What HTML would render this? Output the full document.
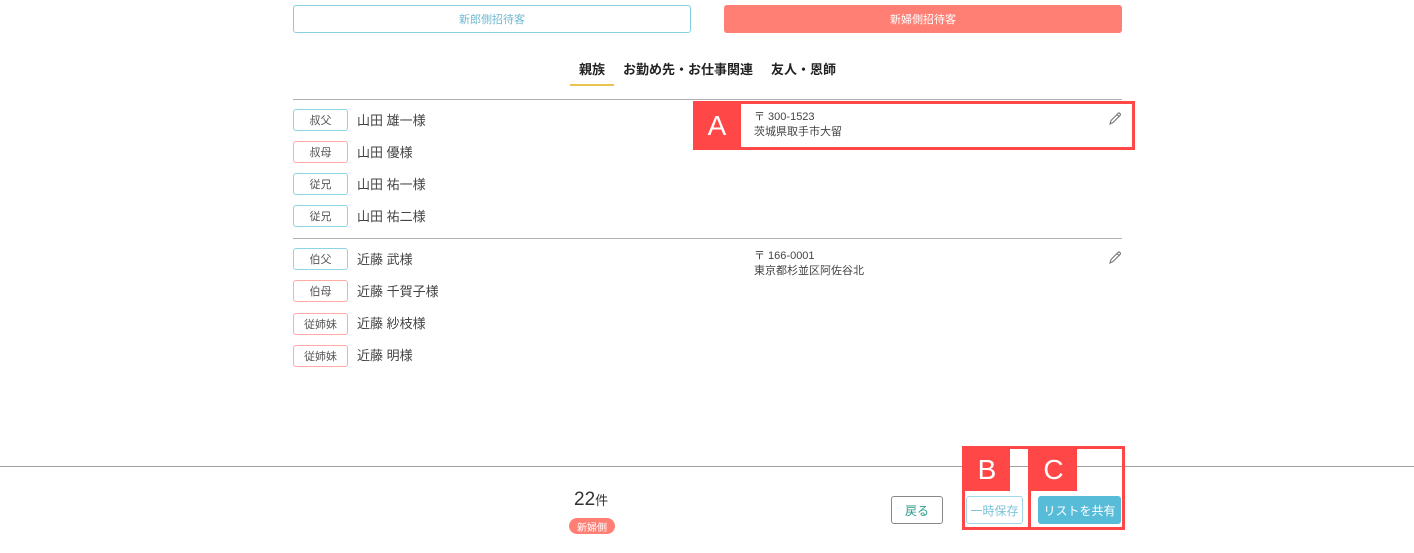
<!DOCTYPE html>
<html><head><meta charset="utf-8"><style>
*{box-sizing:border-box;margin:0;padding:0}
body{width:1414px;height:553px;background:#fff;position:relative;font-family:"Liberation Sans","Noto Sans CJK JP",sans-serif;color:#333;overflow:hidden}
.a{position:absolute}
.btn{position:absolute;display:flex;align-items:center;justify-content:center;font-size:11px;border-radius:3px}
.tag{position:absolute;left:293px;width:55px;height:22px;border:1px solid;border-radius:3px;font-size:11px;display:flex;align-items:center;justify-content:center;color:#555}
.b{border-color:#8fd3e6}.p{border-color:#ffaaa5}
.nm{position:absolute;left:357px;font-size:13px;color:#444;line-height:16px}
.addr{position:absolute;left:754px;font-size:11px;color:#444;line-height:16px}
.lbl{position:absolute;background:#ff4747;color:#fff;font-size:28px;display:flex;align-items:center;justify-content:center}
</style></head><body>
<div class="btn" style="left:293px;top:5px;width:398px;height:28px;border:1px solid #85d0e2;color:#6fb9d0">新郎側招待客</div>
<div class="btn" style="left:724px;top:5px;width:398px;height:28px;background:#ff7f75;color:#fff">新婦側招待客</div>
<div class="a" style="left:579px;top:59px;font-size:13px;font-weight:bold;color:#222;white-space:nowrap">親族</div>
<div class="a" style="left:623px;top:59px;font-size:13px;font-weight:bold;color:#222;white-space:nowrap">お勤め先・お仕事関連</div>
<div class="a" style="left:771px;top:59px;font-size:13px;font-weight:bold;color:#222;white-space:nowrap">友人・恩師</div>
<div class="a" style="left:570px;top:84px;width:44px;height:2px;background:#e8c34f"></div>
<div class="a" style="left:293px;top:99px;width:829px;height:1px;background:#b0b0b0"></div>

<div class="tag b" style="top:109px">叔父</div><div class="nm" style="top:113px">山田 雄一様</div>
<div class="tag p" style="top:141px">叔母</div><div class="nm" style="top:145px">山田 優様</div>
<div class="tag b" style="top:173px">従兄</div><div class="nm" style="top:177px">山田 祐一様</div>
<div class="tag b" style="top:205px">従兄</div><div class="nm" style="top:209px">山田 祐二様</div>

<div class="a" style="left:693px;top:101px;width:442px;height:49px;border:3px solid #ff4747"></div>
<div class="lbl" style="left:693px;top:101px;width:48px;height:49px">A</div>
<div class="addr" style="top:109px">〒 300-1523</div>
<div class="addr" style="top:124px">茨城県取手市大留</div>
<svg class="a" style="left:1107px;top:111px" width="16" height="16" viewBox="0 0 16 16"><path d="M3 13l1-3.5 7-7a1.4 1.4 0 0 1 2 2l-7 7z M10 3.5l2.5 2.5" fill="none" stroke="#777" stroke-width="1.1"/></svg>

<div class="a" style="left:293px;top:238px;width:829px;height:1px;background:#b0b0b0"></div>
<div class="tag b" style="top:248px">伯父</div><div class="nm" style="top:252px">近藤 武様</div>
<div class="tag p" style="top:280px">伯母</div><div class="nm" style="top:284px">近藤 千賀子様</div>
<div class="tag p" style="top:313px">従姉妹</div><div class="nm" style="top:316px">近藤 紗枝様</div>
<div class="tag p" style="top:345px">従姉妹</div><div class="nm" style="top:348px">近藤 明様</div>
<div class="addr" style="top:248px">〒 166-0001</div>
<div class="addr" style="top:263px">東京都杉並区阿佐谷北</div>
<svg class="a" style="left:1107px;top:250px" width="16" height="16" viewBox="0 0 16 16"><path d="M3 13l1-3.5 7-7a1.4 1.4 0 0 1 2 2l-7 7z M10 3.5l2.5 2.5" fill="none" stroke="#777" stroke-width="1.1"/></svg>

<div class="a" style="left:0;top:466px;width:1414px;height:1px;background:#a0a0a0"></div>
<div class="a" style="left:574px;top:489px;font-size:19px;color:#333;white-space:nowrap">22<span style="font-size:13px">件</span></div>
<div class="btn" style="left:569px;top:518px;width:46px;height:16px;border-radius:8px;background:#ff7f75;color:#fff;font-size:10px">新婦側</div>
<div class="btn" style="left:891px;top:496px;width:52px;height:28px;border:1px solid #888;color:#2a9a8a;font-size:12px">戻る</div>
<div class="a" style="left:962px;top:446px;width:163px;height:84px;border:3px solid #ff4747"></div>
<div class="a" style="left:1028px;top:446px;width:3px;height:84px;background:#ff4747"></div>
<div class="lbl" style="left:964px;top:448px;width:46px;height:43px">B</div>
<div class="lbl" style="left:1030px;top:448px;width:47px;height:43px">C</div>
<div class="btn" style="left:966px;top:496px;width:57px;height:28px;border:1px solid #9fd8e8;color:#7cc3d8;font-size:12px;background:#fff">一時保存</div>
<div class="btn" style="left:1038px;top:496px;width:83px;height:28px;background:#56bcd8;color:#fff;font-size:12px">リストを共有</div>
</body></html>
